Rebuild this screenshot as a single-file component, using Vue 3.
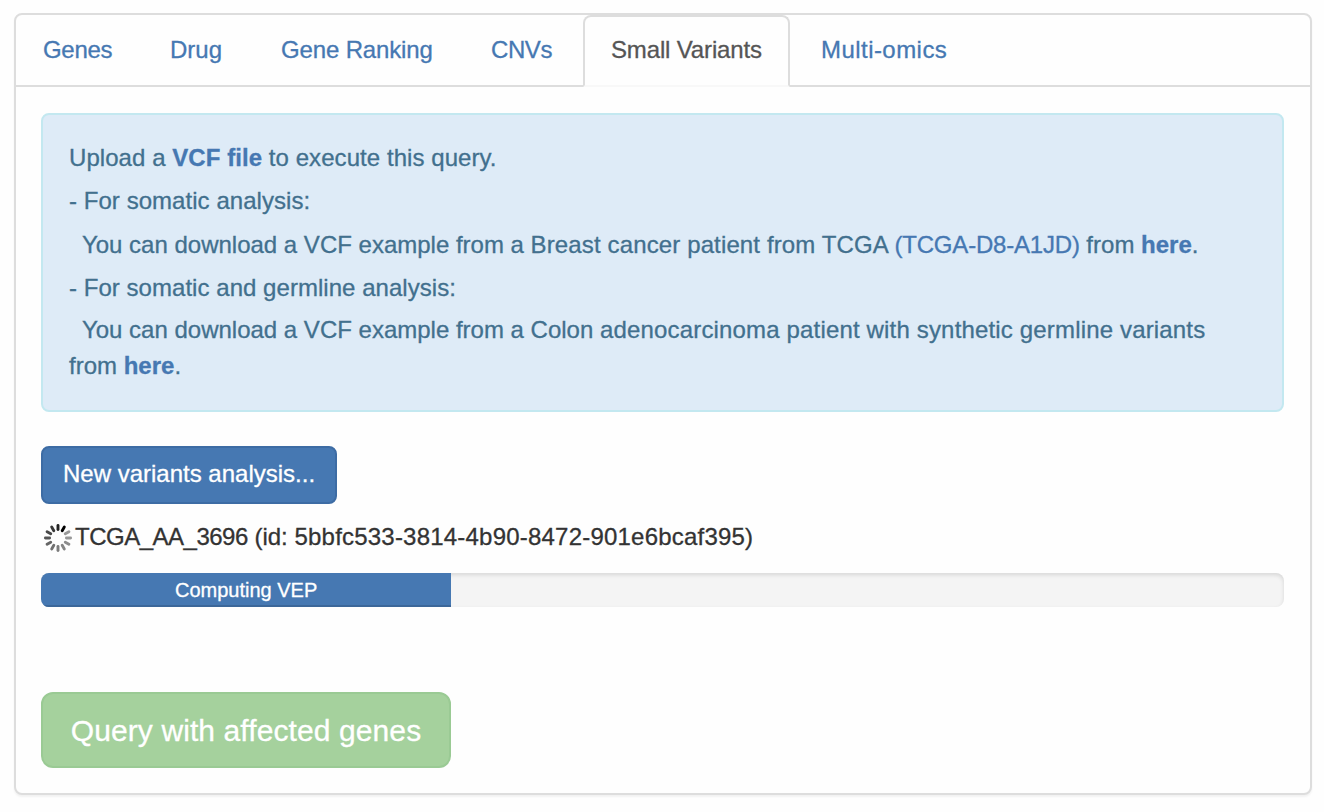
<script setup>
const tabs = [
  { label: 'Genes', key: 'genes' },
  { label: 'Drug', key: 'drug' },
  { label: 'Gene Ranking', key: 'ranking' },
  { label: 'CNVs', key: 'cnvs' },
  { label: 'Small Variants', key: 'small', active: true },
  { label: 'Multi-omics', key: 'omics' },
]
const spokes = ['#222', '#000', '#999', '#999', '#8c8c8c', '#858585', '#7c7c7c', '#707070', '#666', '#555', '#484848', '#383838']
const progress = { label: 'Computing VEP', percent: 33 }
</script>

<template>
  <div class="page">
    <section class="panel">
      <nav class="tabs">
        <a v-for="t in tabs" :key="t.key" class="tab" :class="[t.key, { active: t.active }]">{{ t.label }}</a>
      </nav>
      <div class="body">
        <div class="alert">
          <p class="l1">Upload a <b>VCF file</b> to execute this query.</p>
          <p class="l2">- For somatic analysis:</p>
          <p class="l3">&nbsp; You can download a VCF example from a <span class="patient">Breast cancer patient from TCGA </span><a class="sample">(TCGA-D8-A1JD)</a> from <b>here</b>.</p>
          <p class="l4">- For somatic and germline analysis:</p>
          <p class="l5">&nbsp; You can download a VCF example from a Colon <span class="wide">adenocarcinoma patient with synthetic germline variants</span></p>
          <p class="l6">from <b>here</b>.</p>
        </div>
        <button class="btn primary"><span>New variants analysis...</span></button>
        <div class="job">
          <svg class="spinner" width="30" height="30" viewBox="-15 -15 30 30">
            <line v-for="(c, i) in spokes" :key="i" x1="0" y1="-8.4" x2="0" y2="-12.6" :stroke="c" stroke-width="2.9" stroke-linecap="round" :transform="`rotate(${i * 30})`" />
          </svg>
          <span class="job-name"><span class="sample-name">TCGA_AA_3696</span> (id: <span class="job-id">5bbfc533-3814-4b90-8472-901e6bcaf395)</span></span>
        </div>
        <div class="progress">
          <div class="bar" :style="{ width: progress.percent + '%' }"><span>{{ progress.label }}</span></div>
        </div>
        <button class="btn success"><span>Query with affected genes</span></button>
      </div>
    </section>
  </div>
</template>

<style>
body { background: #fefefe; }
</style>

<style scoped>
.page {
  box-sizing: border-box;
  height: 812px;
  padding: 13px 12px 17px 14px;
  font-family: "Liberation Sans", Arial, sans-serif;
  font-size: 24px;
  line-height: 36px;
  color: #333;
  white-space: nowrap;
  overflow: hidden;
  -webkit-text-stroke-width: .3px;
}
.panel {
  box-sizing: border-box;
  height: 782px;
  border: 2px solid #ddd;
  border-radius: 8px;
  background: #fefefe;
  box-shadow: 0 2px 2px rgba(0, 0, 0, .05);
}
.tabs {
  display: flex;
  box-sizing: border-box;
  height: 72px;
  border-bottom: 2px solid #ddd;
}
.tab {
  box-sizing: border-box;
  flex: none;
  height: 72px;
  padding: 15px 0 0 27px;
  border: 2px solid transparent;
  border-radius: 8px 8px 0 0;
  color: #4678b2;
  letter-spacing: -.15px;
}
.tab.active {
  padding-left: 26px;
  color: #555;
  background: #fefefe;
  border-color: #ddd;
  border-bottom-color: #f8f8f8;
}
.genes { width: 127px; margin-left: -2px; letter-spacing: -.3px; }
.drug { width: 111px; letter-spacing: 0; }
.ranking { width: 210px; }
.cnvs { width: 121px; letter-spacing: -.4px; }
.small { width: 207px; margin-right: 3px; }
.omics { width: 160px; padding-left: 26px; letter-spacing: .45px; }
.body { padding: 26px 26px 0 25px; }
.alert {
  box-sizing: border-box;
  height: 299px;
  padding: 25px 26px;
  border: 2px solid #c3e8f0;
  border-radius: 8px;
  background: #deebf7;
  color: #42708e;
}
.alert p { margin: 0 0 7px; }
.alert .l1 { letter-spacing: .06px; }
.alert .l2 { margin-bottom: 8px; letter-spacing: .05px; }
.alert .l4 { margin-bottom: 6px; letter-spacing: .04px; }
.alert .l5 { margin-bottom: 0; }
.alert b, .alert a { color: #4678b2; }
.patient { letter-spacing: .13px; }
.sample { letter-spacing: -.2px; }
.wide { letter-spacing: .165px; }
.btn {
  display: block;
  box-sizing: border-box;
  padding: 0;
  font-family: inherit;
  color: #fff;
  text-align: center;
}
.primary {
  width: 296px;
  height: 58px;
  margin-top: 34px;
  padding-bottom: 2px;
  border: 2px solid #3d6ca4;
  border-radius: 8px;
  background: #4678b2;
  font-size: 24px;
  line-height: 52px;
}
.job {
  display: flex;
  height: 36px;
  margin-top: 15px;
  padding-left: 2px;
}
.spinner { flex: none; margin-top: 4px; }
.job-name { margin-left: 2px; line-height: 36px; }
.sample-name { letter-spacing: -.5px; }
.job-id { letter-spacing: .21px; }
.progress {
  height: 34px;
  margin-top: 18px;
  border-radius: 8px;
  overflow: hidden;
  background: #f4f4f4;
  box-shadow: inset 0 2px 4px rgba(0, 0, 0, .12);
}
.bar {
  height: 34px;
  background: #4678b2;
  box-shadow: inset 0 -2px 0 #3c6799;
  color: #fff;
  font-size: 20px;
  line-height: 34px;
  text-align: center;
}
.success {
  width: 410px;
  height: 76px;
  margin-top: 85px;
  padding: 2px 0 0;
  border: 2px solid #9aca94;
  border-radius: 12px;
  background: #a5d19d;
  font-size: 30px;
  line-height: 70px;
  letter-spacing: .1px;
}
</style>
